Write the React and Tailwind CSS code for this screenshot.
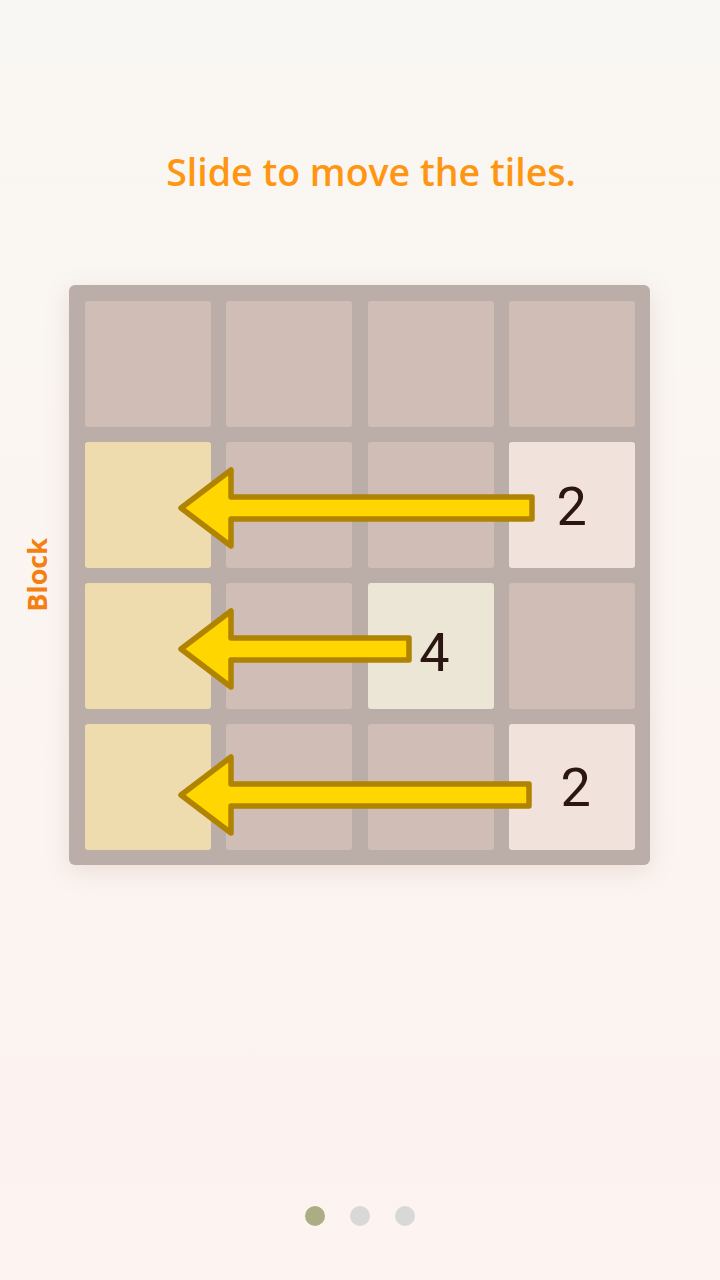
import React from "react";

const rows = [
  ["e", "e", "e", "e"],
  ["y", "e", "e", "2"],
  ["y", "e", "4", "e"],
  ["y", "e", "e", "2b"],
];

function Tile({ kind }) {
  const base = "w-[126px] h-[126px] rounded-[3px] flex items-center justify-center";
  if (kind === "y") return <div className={`${base} bg-[#eedcae]`} />;
  if (kind === "2")
    return (
      <div className={`${base} bg-[#f1e2dc]`}>
        <span className="text-[54px] leading-none text-[#2b1612] font-['Roboto',sans-serif] mt-[4px]">2</span>
      </div>
    );
  if (kind === "2b")
    return (
      <div className={`${base} bg-[#f1e2dc]`}>
        <span className="text-[54px] leading-none text-[#2b1612] font-['Roboto',sans-serif] ml-[8px] mt-[2px]">2</span>
      </div>
    );
  if (kind === "4")
    return (
      <div className={`${base} bg-[#ebe6d5]`}>
        <span className="text-[54px] leading-none text-[#2b1612] font-['Roboto',sans-serif] ml-[8px] mt-[14px]">4</span>
      </div>
    );
  return <div className={`${base} bg-[#cfbdb6]`} />;
}

function Arrow({ y, end }) {
  const t = y - 38;
  const b = y + 38;
  const st = y - 11;
  const sb = y + 11;
  return (
    <path
      d={`M112,${y} L162,${t} L162,${st} L${end},${st} L${end},${sb} L162,${sb} L162,${b} Z`}
      fill="#ffd600"
      stroke="#b08300"
      strokeWidth="5.5"
      strokeLinejoin="round"
    />
  );
}

export default function App() {
  return (
    <div className="w-[720px] h-[1280px] flex flex-col bg-gradient-to-b from-[#f9f7f3] to-[#fdf3f0] font-['Open_Sans',sans-serif]">
      <div className="pt-[146px] pl-[22px] text-center text-[37.5px] font-semibold leading-[52px] text-[#ff9612]">
        Slide to move the tiles.
      </div>
      <div className="mt-[87px] flex items-center pl-[24px]">
        <div className="w-[26px] flex items-center justify-center">
          <span className="[writing-mode:vertical-rl] rotate-180 text-[27px] leading-[28px] font-bold text-[#f57f10] font-['Open_Sans',sans-serif]">
            Block
          </span>
        </div>
        <div className="ml-[19px] relative w-[581px] h-[580px] rounded-[6px] bg-[#bbaea9] shadow-[0_6px_24px_rgba(160,120,90,0.18)] p-[16px]">
          <div className="grid grid-cols-4 gap-x-[16px] gap-y-[15px]">
            {rows.flat().map((k, i) => (
              <Tile key={i} kind={k} />
            ))}
          </div>
          <svg
            className="absolute left-0 top-0 pointer-events-none"
            width="581"
            height="580"
            viewBox="0 0 581 580"
          >
            <Arrow y={223} end={463} />
            <Arrow y={364} end={340} />
            <Arrow y={510} end={460} />
          </svg>
        </div>
      </div>
      <div className="mt-auto mb-[54px] flex justify-center gap-[25px]">
        <div className="w-[20px] h-[20px] rounded-full bg-[#abad83]" />
        <div className="w-[20px] h-[20px] rounded-full bg-[#d8d8d8]" />
        <div className="w-[20px] h-[20px] rounded-full bg-[#d8d8d8]" />
      </div>
    </div>
  );
}
